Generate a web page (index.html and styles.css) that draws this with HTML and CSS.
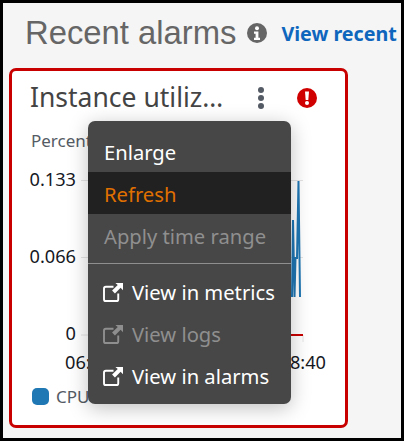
FILE: index.html
```html
<!DOCTYPE html>
<html lang="en">
  <head>
    <meta charset="UTF-8" />
    <title>Recent alarms</title>
    <link rel="stylesheet" href="styles.css">
  </head>
  <body>
    <div class="frame">
      <div class="page-header">
        <h1>Recent alarms</h1>
        <svg class="info-icon" viewBox="0 0 20 20" width="20" height="20">
          <circle cx="10" cy="10" r="10" fill="#666" />
          <circle cx="10" cy="5.2" r="2" fill="#fff" />
          <path d="M7 8.500h4.400v6.200H13v2.200H7v-2.200h1.600v-4H7z" fill="#fff" />
        </svg>
        <a class="view-link" href="#">View recent</a>
      </div>

      <div class="alarm-card">
        <div class="card-header">
          <h2>Instance utiliz…</h2>
          <svg class="dots-icon" viewBox="0 0 8 22" width="8" height="22">
            <circle cx="4" cy="3" r="3" fill="#545b64" />
            <circle cx="4" cy="11" r="3" fill="#545b64" />
            <circle cx="4" cy="19" r="3" fill="#545b64" />
          </svg>
          <svg class="alert-icon" viewBox="0 0 20 20" width="20" height="20">
            <circle cx="10" cy="10" r="10" fill="#d10000" />
            <path d="M8 3.500h4l-.7 8.500H8.700z" fill="#fff" />
            <circle cx="10" cy="15" r="2" fill="#fff" />
          </svg>
        </div>

        <svg class="chart" viewBox="0 0 333 295" width="333" height="295">
          <text class="unit" x="19" y="26">Percent</text>
          <text class="tick" x="64" y="65" text-anchor="end">0.133</text>
          <text class="tick" x="64" y="142" text-anchor="end">0.066</text>
          <text class="tick" x="64" y="219" text-anchor="end">0</text>
          <line class="grid" x1="69" y1="59.500" x2="291" y2="59.500" />
          <line class="grid" x1="69" y1="136.500" x2="291" y2="136.500" />
          <line class="grid" x1="69" y1="214" x2="291" y2="214" />
          <line class="grid" x1="291" y1="214" x2="291" y2="221" />
          <line class="threshold" x1="260" y1="214" x2="291" y2="214" />
          <polyline class="series" points="280,176 281,99 282.500,176 283.500,137 285,137 286.500,60 288,176" />
          <text class="tick" x="53" y="248">06:</text>
          <text class="tick" x="314" y="248" text-anchor="end">8:40</text>
          <rect class="legend-swatch" x="20" y="267" width="17" height="17" rx="5" />
          <text class="legend-label" x="44" y="282">CPU</text>
        </svg>

        <ul class="action-menu">
          <li class="menu-item">Enlarge</li>
          <li class="menu-item is-active">Refresh</li>
          <li class="menu-item is-disabled">Apply time range</li>
          <li class="menu-divider"></li>
          <li class="menu-item">
            <svg class="external-icon" viewBox="0 0 22 20" width="21" height="19">
              <path d="M11 4H3a2 2 0 0 0-2 2v11a2 2 0 0 0 2 2h11a2 2 0 0 0 2-2v-6" />
              <path class="arrow" d="M21 0v7.500l-2.500-2.500-6 6-3-3 6-6L13 0z" />
            </svg>
            View in metrics
          </li>
          <li class="menu-item is-disabled">
            <svg class="external-icon" viewBox="0 0 22 20" width="21" height="19">
              <path d="M11 4H3a2 2 0 0 0-2 2v11a2 2 0 0 0 2 2h11a2 2 0 0 0 2-2v-6" />
              <path class="arrow" d="M21 0v7.500l-2.500-2.500-6 6-3-3 6-6L13 0z" />
            </svg>
            View logs
          </li>
          <li class="menu-item">
            <svg class="external-icon" viewBox="0 0 22 20" width="21" height="19">
              <path d="M11 4H3a2 2 0 0 0-2 2v11a2 2 0 0 0 2 2h11a2 2 0 0 0 2-2v-6" />
              <path class="arrow" d="M21 0v7.500l-2.500-2.500-6 6-3-3 6-6L13 0z" />
            </svg>
            View in alarms
          </li>
        </ul>
      </div>
    </div>
  </body>
</html>
```

FILE: styles.css
```css
* {
  box-sizing: border-box;
}

body {
  margin: 0;
  font-family: "Noto Sans", sans-serif;
}

.frame {
  width: 404px;
  height: 441px;
  border: 3px solid #000;
  background-color: #f5f5f5;
  overflow: hidden;
  padding: 9px 0 0 6px;
}

.page-header {
  display: flex;
  align-items: center;
  height: 42px;
  padding-left: 16px;
  white-space: nowrap;
}

h1 {
  margin: 0;
  font-family: "Liberation Sans", sans-serif;
  font-size: 32.800px;
  font-weight: 400;
  color: #666;
}

.info-icon {
  margin-left: 11px;
  flex-shrink: 0;
}

.view-link {
  margin-left: 14px;
  font-size: 19.700px;
  font-weight: 700;
  color: #0f66bd;
  text-decoration: none;
}

.alarm-card {
  position: relative;
  width: 339px;
  height: 360px;
  margin-top: 14px;
  background-color: #fff;
  border: 3px solid #c80000;
  border-radius: 7px;
}

.card-header {
  display: flex;
  align-items: center;
  height: 50px;
  padding: 3px 0 0 18px;
}

h2 {
  width: 227px;
  margin: 0 0 2px;
  font-size: 26.500px;
  font-weight: 400;
  color: #444;
  white-space: nowrap;
}

.dots-icon {
  flex-shrink: 0;
}

.alert-icon {
  margin-left: 32px;
  flex-shrink: 0;
}

.chart {
  display: block;
  font-size: 18.200px;
  font-family: "Noto Sans", sans-serif;
}

.unit,
.legend-label {
  fill: #545b64;
  font-size: 17px;
}

.tick {
  fill: #16191f;
}

.grid {
  stroke: #e4e4e4;
  stroke-width: 1;
}

.threshold {
  stroke: #c80000;
  stroke-width: 2;
}

.series {
  fill: none;
  stroke: #1f77b4;
  stroke-width: 2;
}

.legend-swatch {
  fill: #1f77b4;
}

.action-menu {
  position: absolute;
  top: 50px;
  left: 76px;
  width: 203px;
  height: 283px;
  margin: 0;
  padding: 9px 0 0;
  list-style: none;
  background-color: #474747;
  border-radius: 7px;
  box-shadow: 0 4px 20px rgba(0, 0, 0, 0.25);
}

.menu-item {
  display: flex;
  align-items: center;
  gap: 8px;
  height: 42px;
  padding: 2px 0 0 16px;
  font-size: 20.200px;
  color: #fff;
}

.is-active {
  background-color: #212121;
  color: #e07000;
}

.is-disabled {
  color: #8f8f8f;
}

.menu-divider {
  height: 1px;
  margin: 7px 0 6px;
  background-color: #8f8f8f;
}

.external-icon {
  flex-shrink: 0;
  margin: 1px 0 0 -1px;
  fill: none;
  stroke: currentColor;
  stroke-width: 2;
}

.external-icon .arrow {
  fill: currentColor;
  stroke: none;
}
```
